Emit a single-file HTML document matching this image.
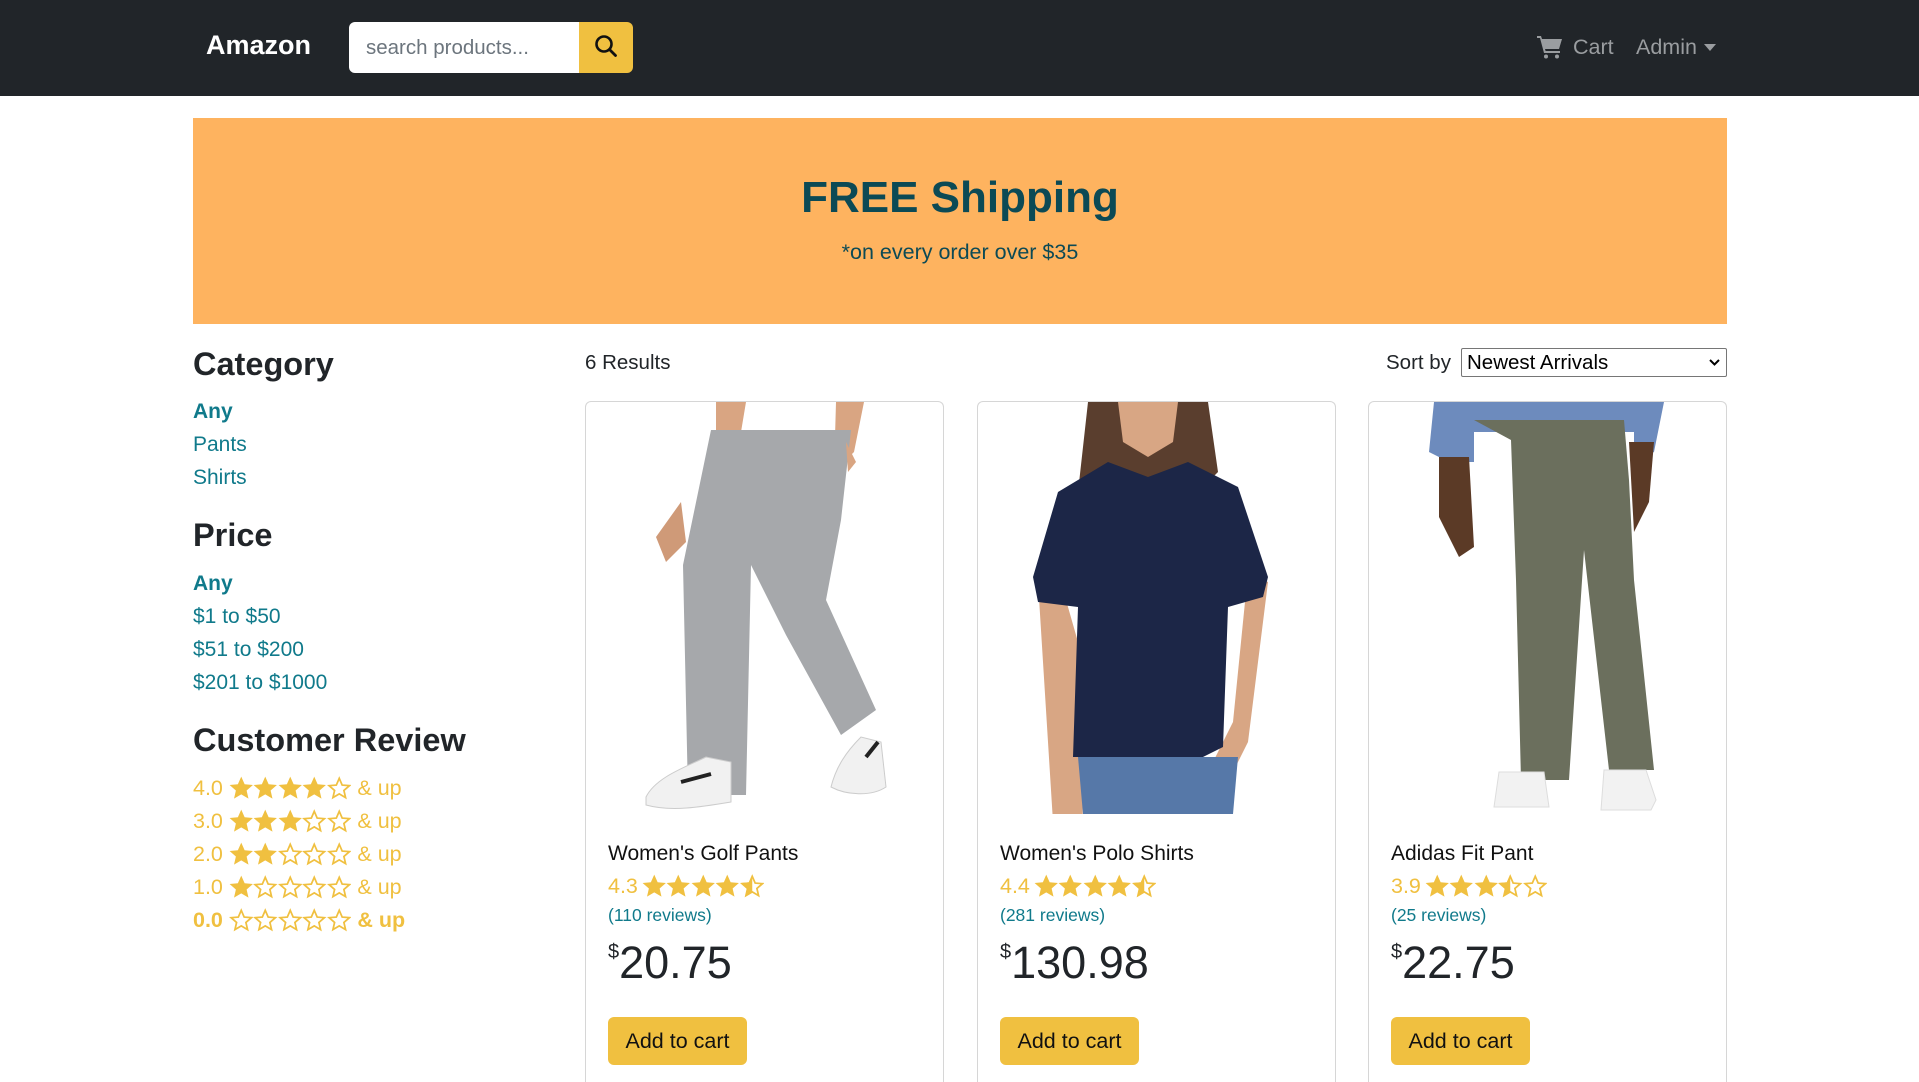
<!DOCTYPE html>
<html style="overflow:hidden;height:1082px"><head><meta charset="utf-8"><style>
*{box-sizing:border-box;margin:0;padding:0}
body{width:1919px;height:1082px;overflow:hidden;background:#fff;font-family:"Liberation Sans",sans-serif;color:#212529;position:relative}
.a{position:absolute;white-space:nowrap}
.nav{left:0;top:0;width:1919px;height:96px;background:#212529}
.link{color:#107a8b;font-size:21px}
.h{font-weight:bold;font-size:32.5px;color:#212529}
.rv{color:#f0c040;font-size:21.5px;display:flex;align-items:center;gap:6px}
.st{display:flex;gap:0}
.st svg{width:24.5px;height:24.5px}
.card{top:401px;width:359px;height:681px;border:1px solid #d6d6d6;border-bottom:none;border-radius:6px 6px 0 0;overflow:hidden}
.btn{background:#f0c040;border-radius:6px;font-size:21.5px;color:#111;padding:0 16px;height:48px;line-height:48px;width:139px;text-align:center}
</style></head><body>
<svg width="0" height="0" style="position:absolute">
<defs>
<symbol id="sf" viewBox="1.5 1.5 21 21"><path d="M12 2l2.9 6.6 7.1.6-5.4 4.7 1.6 7-6.2-3.7-6.2 3.7 1.6-7L2 9.2l7.1-.6z" fill="#f0c040"/></symbol>
<symbol id="so" viewBox="1.5 1.5 21 21"><path d="M12 3.5l2.5 5.8 6.2.5-4.7 4.1 1.4 6.1L12 16.8 6.6 20l1.4-6.1-4.7-4.1 6.2-.5z" fill="none" stroke="#f0c040" stroke-width="1.5"/></symbol>
<symbol id="sh" viewBox="1.5 1.5 21 21"><path d="M12 3.5l2.5 5.8 6.2.5-4.7 4.1 1.4 6.1L12 16.8 6.6 20l1.4-6.1-4.7-4.1 6.2-.5z" fill="none" stroke="#f0c040" stroke-width="1.5"/><path d="M12 2v15.5l-6.2 3.7 1.6-7L2 9.2l7.1-.6z" fill="#f0c040"/></symbol>
</defs></svg>

<div class="a nav"></div>
<div class="a" style="left:206px;top:30px;font-size:27px;font-weight:bold;color:#fff">Amazon</div>
<div class="a" style="left:349px;top:22px;width:230px;height:51px;background:#fff;border-radius:6px 0 0 6px;font-size:20.5px;color:#6c757d;padding:14px 17px">search products...</div>
<div class="a" style="left:579px;top:22px;width:54px;height:51px;background:#f0c040;border-radius:0 6px 6px 0">
<svg width="54" height="51" viewBox="0 0 54 51"><circle cx="25" cy="22" r="7.5" fill="none" stroke="#111" stroke-width="2.6"/><path d="M30.5 27.5l6 6" stroke="#111" stroke-width="2.8" stroke-linecap="round"/></svg></div>
<svg class="a" style="left:1537px;top:35px" width="26" height="24" viewBox="0 0 26 24"><path d="M0 1h4l1 3h20l-3 10H8l.6 2H23v2H7L3 3H0z" fill="#9a9da0"/><circle cx="9" cy="21.5" r="2" fill="#9a9da0"/><circle cx="20" cy="21.5" r="2" fill="#9a9da0"/></svg>
<div class="a" style="left:1573px;top:35px;font-size:21.5px;color:#9a9da0">Cart</div>
<div class="a" style="left:1636px;top:35px;font-size:21.5px;color:#9a9da0">Admin</div>
<svg class="a" style="left:1704px;top:44px" width="12" height="7"><path d="M0 0h12L6 7z" fill="#9a9da0"/></svg>

<div class="a" style="left:193px;top:118px;width:1534px;height:206px;background:#feb35f"></div>
<div class="a" style="left:193px;top:173px;width:1534px;text-align:center;font-size:44px;font-weight:bold;color:#0c4a55">FREE Shipping</div>
<div class="a" style="left:193px;top:240px;width:1534px;text-align:center;font-size:21.5px;color:#0c4a55">*on every order over $35</div>

<div class="a h" style="left:193px;top:346px">Category</div>
<div class="a link" style="left:193px;top:400px;font-weight:bold">Any</div>
<div class="a link" style="left:193px;top:433px">Pants</div>
<div class="a link" style="left:193px;top:466px">Shirts</div>
<div class="a h" style="left:193px;top:517px">Price</div>
<div class="a link" style="left:193px;top:572px;font-weight:bold">Any</div>
<div class="a link" style="left:193px;top:605px">$1 to $50</div>
<div class="a link" style="left:193px;top:638px">$51 to $200</div>
<div class="a link" style="left:193px;top:671px">$201 to $1000</div>
<div class="a h" style="left:193px;top:722px">Customer Review</div>

<div class="a rv" style="left:193px;top:776px">4.0 <span class="st"><svg><use href="#sf"/></svg><svg><use href="#sf"/></svg><svg><use href="#sf"/></svg><svg><use href="#sf"/></svg><svg><use href="#so"/></svg></span> &amp; up</div>
<div class="a rv" style="left:193px;top:809px">3.0 <span class="st"><svg><use href="#sf"/></svg><svg><use href="#sf"/></svg><svg><use href="#sf"/></svg><svg><use href="#so"/></svg><svg><use href="#so"/></svg></span> &amp; up</div>
<div class="a rv" style="left:193px;top:842px">2.0 <span class="st"><svg><use href="#sf"/></svg><svg><use href="#sf"/></svg><svg><use href="#so"/></svg><svg><use href="#so"/></svg><svg><use href="#so"/></svg></span> &amp; up</div>
<div class="a rv" style="left:193px;top:875px">1.0 <span class="st"><svg><use href="#sf"/></svg><svg><use href="#so"/></svg><svg><use href="#so"/></svg><svg><use href="#so"/></svg><svg><use href="#so"/></svg></span> &amp; up</div>
<div class="a rv" style="left:193px;top:908px;font-weight:bold">0.0 <span class="st"><svg><use href="#so"/></svg><svg><use href="#so"/></svg><svg><use href="#so"/></svg><svg><use href="#so"/></svg><svg><use href="#so"/></svg></span> &amp; up</div>

<div class="a" style="left:585px;top:351px;font-size:20.5px">6 Results</div>
<div class="a" style="left:1386px;top:351px;font-size:20.5px">Sort by</div>
<div class="a" style="left:1461px;top:348px;width:266px;height:29px;border:1px solid #767676;border-radius:2px;font-size:20.5px;color:#000;padding:2px 5px">Newest Arrivals
<svg style="position:absolute;right:6px;top:10px" width="11" height="8"><path d="M1 1l4.5 4.5L10 1" fill="none" stroke="#000" stroke-width="2"/></svg></div>

<!-- card 1 -->
<div class="a card" style="left:585px">
<svg width="359" height="412" viewBox="0 0 359 412">
<path d="M130 0h30l-5 30h-25z M250 0h28l-10 50 -20 20z" fill="#d9a582"/>
<path d="M95 100l-25 35 10 25 20-20z" fill="#cf9a78"/>
<path d="M125 28h140l-10 90-15 80 50 110-35 25-55-100-35-70-5 230h-58l-5-230z" fill="#a6a8ab"/>
<path d="M260 40l10 20-8 10z" fill="#d9a582"/>
<path d="M60 395c10-20 40-30 60-40l25 5 0 40c-30 5-60 10-85 3z" fill="#f1f1f1" stroke="#ccc"/>
<path d="M245 385c5-20 15-35 30-50l20 5 5 45c-15 10-40 8-55 0z" fill="#f1f1f1" stroke="#ccc"/>
<path d="M95 380l30-8" stroke="#222" stroke-width="4"/><path d="M280 355l12-15" stroke="#222" stroke-width="4"/>
</svg>
<div class="a" style="left:22px;top:440px;font-size:21px;color:#111">Women's Golf Pants</div>
<div class="a rv" style="left:22px;top:472px;gap:4px">4.3 <span class="st"><svg><use href="#sf"/></svg><svg><use href="#sf"/></svg><svg><use href="#sf"/></svg><svg><use href="#sf"/></svg><svg><use href="#sh"/></svg></span></div>
<div class="a" style="left:22px;top:503px;font-size:17.5px;color:#107a8b">(110 reviews)</div>
<div class="a" style="left:22px;top:535px;font-size:45px"><span style="font-size:20px;vertical-align:top;position:relative;top:4px">$</span>20.75</div>
<div class="a btn" style="left:22px;top:615px">Add to cart</div>
</div>

<!-- card 2 -->
<div class="a card" style="left:977px">
<svg width="359" height="412" viewBox="0 0 359 412">
<path d="M110 0h120l10 70-20 20-10 30h-80l-30-30z" fill="#5a3e2e"/>
<path d="M140 0h60l-5 40-25 15-25-15z" fill="#d8a684"/>
<path d="M80 170l-20 10 15 240h30l-5-180z M270 170l20 10-20 160-20 40-15-20 20-40z" fill="#d8a684"/>
<path d="M130 60l40 15 40-15 50 25 30 90-5 20-35 10-5 140-20 10H95l5-150-40 -5 -5-25 25-85z" fill="#1c2647"/>
<path d="M100 355h160l-5 57H105z" fill="#5678a8"/>
</svg>
<div class="a" style="left:22px;top:440px;font-size:21px;color:#111">Women's Polo Shirts</div>
<div class="a rv" style="left:22px;top:472px;gap:4px">4.4 <span class="st"><svg><use href="#sf"/></svg><svg><use href="#sf"/></svg><svg><use href="#sf"/></svg><svg><use href="#sf"/></svg><svg><use href="#sh"/></svg></span></div>
<div class="a" style="left:22px;top:503px;font-size:17.5px;color:#107a8b">(281 reviews)</div>
<div class="a" style="left:22px;top:535px;font-size:45px"><span style="font-size:20px;vertical-align:top;position:relative;top:4px">$</span>130.98</div>
<div class="a btn" style="left:22px;top:615px">Add to cart</div>
</div>

<!-- card 3 -->
<div class="a card" style="left:1368px">
<svg width="359" height="412" viewBox="0 0 359 412">
<path d="M65 0h230l-10 50-20 10v-30H105v30l-25 0-20-10z" fill="#6d8bbd"/>
<path d="M70 55h30l5 90-15 10-20-40z M260 40h25l-5 60-15 30z" fill="#5b3a26"/>
<path d="M105 18h150l5 60 5 100 20 190h-45l-25-220-15 230h-48l-5-200-5-140z" fill="#6b6f5d"/>
<path d="M130 370h45l5 35h-55z M235 368h42l10 30-5 10h-50z" fill="#f2f2f2" stroke="#ddd"/>
</svg>
<div class="a" style="left:22px;top:440px;font-size:21px;color:#111">Adidas Fit Pant</div>
<div class="a rv" style="left:22px;top:472px;gap:4px">3.9 <span class="st"><svg><use href="#sf"/></svg><svg><use href="#sf"/></svg><svg><use href="#sf"/></svg><svg><use href="#sh"/></svg><svg><use href="#so"/></svg></span></div>
<div class="a" style="left:22px;top:503px;font-size:17.5px;color:#107a8b">(25 reviews)</div>
<div class="a" style="left:22px;top:535px;font-size:45px"><span style="font-size:20px;vertical-align:top;position:relative;top:4px">$</span>22.75</div>
<div class="a btn" style="left:22px;top:615px">Add to cart</div>
</div>
</body></html>
